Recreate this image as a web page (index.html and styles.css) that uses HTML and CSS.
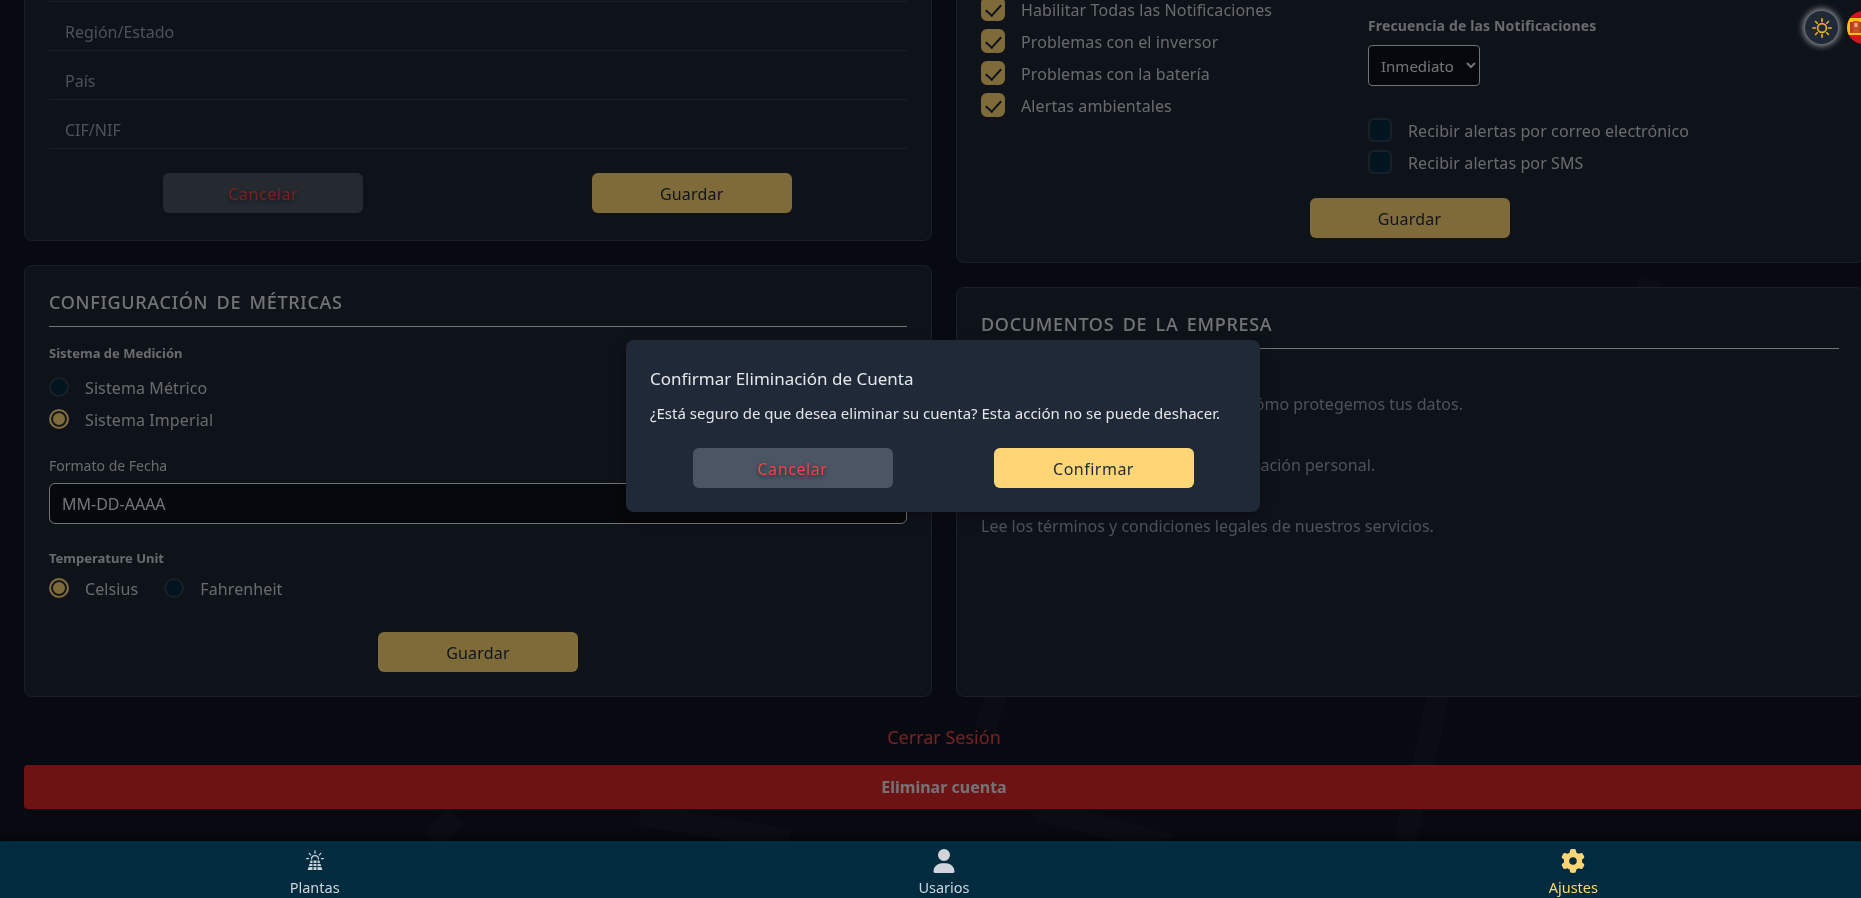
FILE: index.html
```html
<!DOCTYPE html>
<html lang="es">
<head>
    <meta charset="UTF-8">
    <title>Ajustes</title>
    <link rel="stylesheet" href="styles.css">
</head>
<body>
    <svg class="bg-marks" viewBox="0 0 1888 898" aria-hidden="true">
        <path d="M1470 560 L1405 841"/>
        <path d="M1650 280 L1620 400"/>
        <path d="M1040 560 L985 730"/>
        <path d="M640 815 L790 840"/>
        <path d="M1040 810 L1170 845"/>
        <path d="M455 815 L433 841"/>
        <path d="M75 430 L60 520"/>
    </svg>

    <main class="settings-page">
        <div class="settings-columns">
            <div class="settings-col">
                <section class="card">
                    <h2 class="card-title card-title-form">Datos de la empresa</h2>
                    <div class="field-row">Ciudad</div>
                    <div class="field-row">Región/Estado</div>
                    <div class="field-row">País</div>
                    <div class="field-row">CIF/NIF</div>
                    <div class="btn-row btn-row-nudge">
                        <button class="btn btn-cancel">Cancelar</button>
                        <button class="btn btn-save">Guardar</button>
                    </div>
                </section>

                <section class="card">
                    <h2 class="card-title">Configuración de métricas</h2>
                    <div class="group-label">Sistema de Medición</div>
                    <div class="radio-stack">
                        <label class="option"><span class="radio"></span>Sistema Métrico</label>
                        <label class="option"><span class="radio on"></span>Sistema Imperial</label>
                    </div>
                    <div class="date-label">Formato de Fecha</div>
                    <select class="date-select">
                        <option>MM-DD-AAAA</option>
                    </select>
                    <div class="group-label temp-label">Temperature Unit</div>
                    <div class="radio-inline">
                        <label class="option"><span class="radio on"></span>Celsius</label>
                        <label class="option"><span class="radio"></span>Fahrenheit</label>
                    </div>
                    <div class="btn-row btn-row-metrics">
                        <button class="btn btn-save">Guardar</button>
                    </div>
                </section>
            </div>

            <div class="settings-col">
                <section class="card">
                    <h2 class="card-title card-title-notify">Notificaciones</h2>
                    <div class="notify-grid">
                        <div class="check-stack">
                            <label class="option"><span class="check on"></span>Habilitar Todas las Notificaciones</label>
                            <label class="option"><span class="check on"></span>Problemas con el inversor</label>
                            <label class="option"><span class="check on"></span>Problemas con la batería</label>
                            <label class="option"><span class="check on"></span>Alertas ambientales</label>
                        </div>
                        <div class="notify-side">
                            <div class="group-label">Frecuencia de las Notificaciones</div>
                            <select class="freq-select">
                                <option>Inmediato</option>
                            </select>
                            <div class="check-stack channel-stack">
                                <label class="option"><span class="check"></span>Recibir alertas por correo electrónico</label>
                                <label class="option"><span class="check"></span>Recibir alertas por SMS</label>
                            </div>
                        </div>
                    </div>
                    <div class="btn-row btn-row-metrics btn-row-nudge">
                        <button class="btn btn-save">Guardar</button>
                    </div>
                </section>

                <section class="card card-docs">
                    <h2 class="card-title">Documentos de la empresa</h2>
                    <div class="doc-list">
                        <div class="doc-item">
                            <h3>Política de Privacidad</h3>
                            <p>Conoce nuestra política y descubre cómo protegemos tus datos.</p>
                        </div>
                        <div class="doc-item">
                            <h3>Protección de Datos</h3>
                            <p>Mira cómo se usa y se trata tu información personal.</p>
                        </div>
                        <div class="doc-item">
                            <h3>Términos y Condiciones</h3>
                            <p>Lee los términos y condiciones legales de nuestros servicios.</p>
                        </div>
                    </div>
                </section>
            </div>
        </div>

        <a class="logout-link">Cerrar Sesión</a>
        <button class="delete-btn">Eliminar cuenta</button>
    </main>

    <div class="modal-overlay">
        <div class="modal">
            <h3>Confirmar Eliminación de Cuenta</h3>
            <p>¿Está seguro de que desea eliminar su cuenta? Esta acción no se puede deshacer.</p>
            <div class="modal-btns">
                <button class="btn btn-modal-cancel">Cancelar</button>
                <button class="btn btn-modal-ok">Confirmar</button>
            </div>
        </div>
    </div>

    <div class="top-tools">
        <button class="theme-btn" aria-label="Tema">
            <svg width="22" height="22" viewBox="0 0 22 22" fill="none" stroke="#f2b211" stroke-width="1.6" stroke-linecap="round">
                <circle cx="11" cy="11" r="4.4"/>
                <path d="M11 1.800v2.600M11 17.600v2.600M1.800 11h2.600M17.600 11h2.600M4.500 4.500l1.800 1.800M15.700 15.700l1.800 1.800M4.500 17.500l1.800-1.800M15.700 6.300l1.800-1.800"/>
            </svg>
        </button>
        <div class="lang-flag">
            <svg width="33" height="33" viewBox="0 0 33 33">
                <rect width="33" height="33" fill="#d8121f"/>
                <rect y="7" width="33" height="17" fill="#fbc400"/>
                <rect x="3" y="11" width="3" height="11" fill="#b5421c"/>
                <rect x="6" y="10" width="6" height="12" rx="1" fill="#c8501e"/>
                <rect x="7.500" y="12" width="3" height="4" fill="#e8b080"/>
                <rect x="12" y="11" width="2" height="11" fill="#b5421c"/>
            </svg>
        </div>
    </div>

    <nav class="bottom-nav">
        <a class="nav-item">
            <svg width="24" height="24" viewBox="0 0 24 24" fill="none" stroke="currentColor" stroke-linecap="round">
                <path d="M8.600 10a3.400 3.400 0 0 1 6.800 0" stroke-width="1.3"/>
                <path d="M12 2v2.200M6.200 4.400l1.500 1.500M17.800 4.400l-1.500 1.500M3.600 9.600h2M18.400 9.600h2" stroke-width="1.3"/>
                <path d="M7.600 11.500h8.800L19.400 21H4.600z" fill="currentColor" stroke="none"/>
                <path d="M2 14.400h20M2 17.600h20M10 10v12M14 10v12" stroke="#012b3e" stroke-width="1"/>
            </svg>
            <span>Plantas</span>
        </a>
        <a class="nav-item">
            <svg width="24" height="24" viewBox="0 0 448 512" fill="currentColor">
                <path d="M224 256A128 128 0 1 0 224 0a128 128 0 1 0 0 256zm-45.700 48C79.800 304 0 383.800 0 482.300C0 498.700 13.300 512 29.700 512H418.300c16.400 0 29.700-13.300 29.700-29.700C448 383.800 368.200 304 269.700 304H178.300z"/>
            </svg>
            <span>Usarios</span>
        </a>
        <a class="nav-item active">
            <svg width="24" height="24" viewBox="0 0 512 512" fill="currentColor">
                <path d="M495.900 166.600c3.200 8.700 .5 18.400-6.400 24.600l-43.300 39.400c1.100 8.300 1.700 16.800 1.700 25.400s-.6 17.100-1.700 25.400l43.300 39.400c6.900 6.200 9.600 15.900 6.400 24.600c-4.400 11.900-9.700 23.300-15.800 34.300l-4.700 8.100c-6.600 11-14 21.400-22.100 31.200c-5.900 7.200-15.700 9.600-24.500 6.800l-55.700-17.700c-13.400 10.300-28.200 18.900-44 25.400l-12.500 57.100c-2 9.100-9 16.300-18.200 17.800c-13.800 2.300-28 3.500-42.500 3.500s-28.700-1.200-42.500-3.500c-9.200-1.500-16.200-8.700-18.200-17.800l-12.500-57.100c-15.800-6.500-30.600-15.100-44-25.400L83.100 425.900c-8.800 2.800-18.600 .3-24.500-6.800c-8.100-9.800-15.500-20.200-22.100-31.200l-4.700-8.100c-6.100-11-11.400-22.400-15.800-34.300c-3.200-8.700-.5-18.400 6.400-24.600l43.300-39.400C64.600 273.100 64 264.600 64 256s.6-17.100 1.700-25.400L22.400 191.200c-6.900-6.200-9.600-15.900-6.400-24.600c4.400-11.900 9.700-23.300 15.800-34.300l4.700-8.100c6.600-11 14-21.400 22.100-31.200c5.900-7.200 15.700-9.600 24.500-6.800l55.700 17.700c13.400-10.300 28.200-18.900 44-25.400l12.500-57.100c2-9.100 9-16.300 18.200-17.800C227.300 1.200 241.500 0 256 0s28.700 1.200 42.500 3.500c9.200 1.500 16.200 8.700 18.200 17.800l12.500 57.100c15.800 6.500 30.600 15.100 44 25.400l55.700-17.700c8.800-2.800 18.600-.3 24.500 6.800c8.100 9.800 15.500 20.200 22.100 31.200l4.700 8.100c6.100 11 11.400 22.400 15.800 34.300zM256 336a80 80 0 1 0 0-160 80 80 0 1 0 0 160z"/>
            </svg>
            <span>Ajustes</span>
        </a>
    </nav>
</body>
</html>
```

FILE: styles.css
```css
* {
    box-sizing: border-box;
}

html, body {
    height: 100%;
}

body {
    margin: 0;
    overflow: hidden;
    background-color: #0f1723;
    color: #d1d5db;
    font-family: 'Noto Sans', sans-serif;
    font-size: 16px;
}

button {
    font-family: inherit;
}

.bg-marks {
    position: fixed;
    top: 0;
    left: 0;
    width: 1888px;
    height: 898px;
}

.bg-marks path {
    fill: none;
    stroke: rgba(255, 255, 255, 0.025);
    stroke-width: 22;
}

/* the page is scrolled down, the top of it is out of view */
.settings-page {
    position: relative;
    width: 1888px;
    margin-top: -130px;
    padding: 0 24px;
}

.settings-columns {
    display: flex;
    gap: 24px;
}

.settings-col {
    flex: 1;
    display: flex;
    flex-direction: column;
    gap: 24px;
}

.card {
    background-color: rgba(31, 41, 55, 0.8);
    border: 1px solid #374151;
    border-radius: 8px;
    padding: 24px;
}

.card-docs {
    flex: 1;
}

.card-title {
    margin: 0;
    height: 37px;
    line-height: 24px;
    border-bottom: 1px solid #e5e7eb;
    color: #e5e7eb;
    font-size: 18px;
    font-weight: 500;
    text-transform: uppercase;
    letter-spacing: 0.7px;
    word-spacing: 3px;
}

.card-title-form {
    margin-bottom: 21px;
}

.card-title-notify {
    margin-bottom: 65px;
}

.field-row {
    height: 49px;
    padding: 11px 0 0 16px;
    line-height: 38px;
    border-bottom: 1px solid #374151;
    color: #9ca3af;
}

.btn-row {
    display: flex;
    justify-content: space-around;
    margin-top: 24px;
    margin-bottom: 3px;
}

.btn-row-nudge {
    padding-right: 1px;
}

.btn {
    width: 200px;
    height: 40px;
    padding-top: 2px;
    border: none;
    border-radius: 6px;
    font-size: 16px;
    letter-spacing: 0.2px;
}

.btn-cancel {
    background-color: #4b5563;
    color: #ef4444;
    letter-spacing: 0.6px;
    text-shadow: 0 2px 4px rgba(0, 0, 0, 0.6);
}

.btn-save {
    background-color: #ffd675;
    color: #1f2937;
}

.group-label {
    height: 20px;
    line-height: 20px;
    margin-top: 16px;
    color: #d1d5db;
    font-size: 13px;
    font-weight: 700;
}

.radio-stack {
    display: flex;
    flex-direction: column;
    gap: 12px;
    margin-top: 14px;
}

.option {
    display: flex;
    align-items: center;
    height: 20px;
    padding-top: 2px;
    gap: 16px;
    color: #d1d5db;
    font-size: 16px;
    letter-spacing: 0.1px;
}

.radio {
    flex: none;
    width: 20px;
    height: 20px;
    margin-top: -2px;
    border: 2px solid #374151;
    border-radius: 50%;
    background-color: #012b3e;
}

.radio.on {
    border-color: #ffd675;
    background-color: #ffd675;
    box-shadow: inset 0 0 0 2px #1f2937;
}

.date-label {
    height: 20px;
    line-height: 20px;
    margin-top: 27px;
    color: #d1d5db;
    font-size: 14px;
}

.date-select {
    display: block;
    width: 100%;
    height: 41px;
    margin-top: 7px;
    padding: 0 8px;
    border: 1px solid #e5e7eb;
    border-radius: 6px;
    background-color: #0b1018;
    color: #e5e7eb;
    font-family: inherit;
    font-size: 16px;
}

.temp-label {
    margin-top: 24px;
}

.radio-inline {
    display: flex;
    gap: 26px;
    margin-top: 10px;
}

.btn-row-metrics {
    margin-top: 34px;
    margin-bottom: 0;
}

.notify-grid {
    display: grid;
    grid-template-columns: 387px 1fr;
}

.check-stack {
    display: flex;
    flex-direction: column;
    gap: 8px;
}

.check-stack .option {
    height: 24px;
}

.check {
    position: relative;
    flex: none;
    width: 24px;
    height: 24px;
    margin-top: -2px;
    border: 2px solid #374151;
    border-radius: 6px;
    background-color: #012b3e;
}

.check.on {
    border-color: #ffd675;
    background-color: #ffd675;
}

.check.on::after {
    content: "";
    position: absolute;
    left: 6px;
    top: 2px;
    width: 7px;
    height: 13px;
    border-right: 2px solid #1f2937;
    border-bottom: 2px solid #1f2937;
    transform: rotate(42deg);
}

.notify-side {
    padding-top: 19px;
}

.notify-side .group-label {
    margin-top: 0;
    font-size: 14px;
    letter-spacing: 0.15px;
}

.freq-select {
    display: block;
    width: 112px;
    height: 41px;
    margin-top: 9px;
    padding: 0 8px;
    border: 1px solid #e5e7eb;
    border-radius: 4px;
    background-color: #0b1018;
    color: #e5e7eb;
    font-family: inherit;
    font-size: 15px;
}

.channel-stack {
    margin-top: 32px;
}

.notify-grid + .btn-row-metrics {
    margin-top: 24px;
}

.doc-list {
    display: flex;
    flex-direction: column;
    gap: 13px;
    margin-top: 19px;
}

.doc-item h3 {
    margin: 0;
    height: 24px;
    font-size: 16px;
    font-weight: 400;
}

.doc-item p {
    margin: 0;
    line-height: 24px;
    color: #9ca3af;
}

.logout-link {
    display: block;
    margin-top: 28px;
    line-height: 24px;
    text-align: center;
    color: #ef4444;
    font-size: 18px;
}

.delete-btn {
    display: block;
    width: 100%;
    height: 44px;
    margin-top: 16px;
    border: none;
    border-radius: 4px;
    background-color: #dc2626;
    color: #e5e7eb;
    font-size: 16px;
    font-weight: 700;
}

.modal-overlay {
    position: fixed;
    top: 0;
    left: 0;
    width: 1888px;
    height: 898px;
    padding: 0 2px 46px 0;
    display: flex;
    align-items: center;
    justify-content: center;
    background-color: rgba(0, 0, 0, 0.5);
}

.modal {
    width: 634px;
    padding: 24px;
    border-radius: 8px;
    background-color: #1f2937;
    color: #e5e7eb;
    box-shadow: 0 4px 16px rgba(0, 0, 0, 0.3);
}

.modal h3 {
    margin: 0;
    padding-top: 1px;
    height: 28px;
    line-height: 28px;
    font-size: 17px;
    font-weight: 400;
}

.modal p {
    margin: 9px 0 0;
    line-height: 24px;
    font-size: 15px;
}

.modal-btns {
    display: flex;
    justify-content: center;
    gap: 101px;
    margin-top: 23px;
}

.btn-modal-cancel {
    background-color: #4b5563;
    color: #ef4444;
    letter-spacing: 0.6px;
    text-shadow: 0 2px 4px rgba(0, 0, 0, 0.6);
}

.btn-modal-ok {
    background-color: #ffd675;
    color: #1f2937;
    letter-spacing: 0.5px;
}

.top-tools {
    position: fixed;
    top: 11px;
    left: 1805px;
    display: flex;
    align-items: center;
    gap: 9px;
}

.theme-btn {
    display: flex;
    align-items: center;
    justify-content: center;
    width: 33px;
    height: 33px;
    padding: 0;
    border: none;
    border-radius: 50%;
    background-color: #1f2937;
    box-shadow: 0 0 6px 2px rgba(210, 210, 210, 0.7);
}

.lang-flag {
    width: 33px;
    height: 33px;
    border-radius: 50%;
    overflow: hidden;
}

.bottom-nav {
    position: fixed;
    left: 0;
    bottom: 0;
    width: 1888px;
    height: 57px;
    display: flex;
    background-color: #012b3e;
    box-shadow: 0 -3px 6px rgba(0, 0, 0, 0.6);
}

.nav-item {
    flex: 1;
    display: flex;
    flex-direction: column;
    align-items: center;
    padding-top: 8px;
    color: #d1d5db;
    font-size: 14.5px;
}

.nav-item span {
    margin-top: 5px;
    line-height: 19px;
}

.nav-item.active {
    color: #ffd675;
}
```
